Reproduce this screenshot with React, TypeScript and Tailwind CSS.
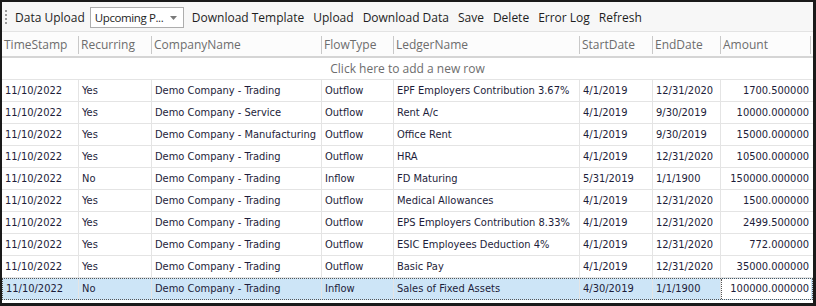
import React from "react";

type Row = {
  ts: string;
  rec: string;
  company: string;
  flow: string;
  ledger: string;
  start: string;
  end: string;
  amount: string;
};

const rows: Row[] = [
  { ts: "11/10/2022", rec: "Yes", company: "Demo Company - Trading", flow: "Outflow", ledger: "EPF Employers Contribution 3.67%", start: "4/1/2019", end: "12/31/2020", amount: "1700.500000" },
  { ts: "11/10/2022", rec: "Yes", company: "Demo Company - Service", flow: "Outflow", ledger: "Rent A/c", start: "4/1/2019", end: "9/30/2019", amount: "10000.000000" },
  { ts: "11/10/2022", rec: "Yes", company: "Demo Company - Manufacturing", flow: "Outflow", ledger: "Office Rent", start: "4/1/2019", end: "9/30/2019", amount: "15000.000000" },
  { ts: "11/10/2022", rec: "Yes", company: "Demo Company - Trading", flow: "Outflow", ledger: "HRA", start: "4/1/2019", end: "12/31/2020", amount: "10500.000000" },
  { ts: "11/10/2022", rec: "No", company: "Demo Company - Trading", flow: "Inflow", ledger: "FD Maturing", start: "5/31/2019", end: "1/1/1900", amount: "150000.000000" },
  { ts: "11/10/2022", rec: "Yes", company: "Demo Company - Trading", flow: "Outflow", ledger: "Medical Allowances", start: "4/1/2019", end: "12/31/2020", amount: "1500.000000" },
  { ts: "11/10/2022", rec: "Yes", company: "Demo Company - Trading", flow: "Outflow", ledger: "EPS Employers Contribution 8.33%", start: "4/1/2019", end: "12/31/2020", amount: "2499.500000" },
  { ts: "11/10/2022", rec: "Yes", company: "Demo Company - Trading", flow: "Outflow", ledger: "ESIC Employees Deduction 4%", start: "4/1/2019", end: "12/31/2020", amount: "772.000000" },
  { ts: "11/10/2022", rec: "Yes", company: "Demo Company - Trading", flow: "Outflow", ledger: "Basic Pay", start: "4/1/2019", end: "12/31/2020", amount: "35000.000000" },
  { ts: "11/10/2022", rec: "No", company: "Demo Company - Trading", flow: "Inflow", ledger: "Sales of Fixed Assets", start: "4/30/2019", end: "1/1/1900", amount: "100000.000000" },
];

// column widths in px, summing to the grid width
const cols = [
  { key: "ts", title: "TimeStamp", w: 77 },
  { key: "rec", title: "Recurring", w: 73 },
  { key: "company", title: "CompanyName", w: 170 },
  { key: "flow", title: "FlowType", w: 72 },
  { key: "ledger", title: "LedgerName", w: 186 },
  { key: "start", title: "StartDate", w: 73 },
  { key: "end", title: "EndDate", w: 68 },
  { key: "amount", title: "Amount", w: 90 },
] as const;

const toolbarItems = ["Download Template", "Upload", "Download Data", "Save", "Delete", "Error Log", "Refresh"];

const uiFont = { fontFamily: '"Open Sans", "Noto Sans", sans-serif' };
const gridFont = { fontFamily: '"DejaVu Sans", Verdana, sans-serif', fontStretch: "condensed" as const };

const Gripper = () => (
  <div className="flex flex-col gap-[2px] ml-[3px] mr-[8px] mt-[-2px]">
    {[0, 1, 2, 3].map((i) => (
      <div key={i} className="w-[2px] h-[2px] bg-[#9a9a9a]" />
    ))}
  </div>
);

export default function App() {
  return (
    <div className="w-[816px] h-[306px] bg-white border-t-2 border-l-2 border-r-[3px] border-b-[3px] border-[#1a1a1a] overflow-hidden">
      {/* toolbar */}
      <div
        className="h-[30px] flex items-center pt-[3px] bg-[#f7f7f7] border-b border-[#e3e3e3] text-[12px] text-[#1e1e1e]"
        style={uiFont}
      >
        <Gripper />
        <span className="mr-[5px]">Data Upload</span>
        <div className="w-[94px] h-[21px] border border-[#adadad] bg-white flex items-center justify-between pl-[4px] pr-[6px] mr-[8px] mt-[-1px]">
          <span className="whitespace-nowrap tracking-[-0.4px] text-[11.5px]">Upcoming P...</span>
          <svg width="7" height="4" viewBox="0 0 7 4" className="shrink-0">
            <path d="M0 0h7L3.5 4z" fill="#7a7a7a" />
          </svg>
        </div>
        <div className="flex gap-[9px]">
          {toolbarItems.map((t) => (
            <span key={t}>{t}</span>
          ))}
        </div>
      </div>

      {/* header */}
      <div
        className="h-[26px] flex items-center pt-[1px] bg-[#fcfcfc] border-b-2 border-[#d5d5d5] text-[12px] text-[#6d6d6d]"
        style={uiFont}
      >
        {cols.map((c) => (
          <div
            key={c.key}
            className="h-[18px] flex items-center pl-[2px] border-r border-[#c9c9c9] shrink-0"
            style={{ width: c.w }}
          >
            {c.title}
          </div>
        ))}
      </div>

      {/* new row */}
      <div
        className="h-[22px] flex items-center justify-center border-b border-[#e4e4e4] text-[12px] text-[#6d6d6d]"
        style={uiFont}
      >
        Click here to add a new row
      </div>

      {/* data */}
      <div className="text-[11px] text-[#1d1d3a]" style={gridFont}>
        {rows.map((r, i) => {
          const selected = i === rows.length - 1;
          return (
            <div
              key={i}
              className={
                selected
                  ? "h-[22px] flex bg-[#cde5f7] border border-dotted border-[#555]"
                  : "h-[22px] flex border-b border-[#e4e4e4]"
              }
            >
              {cols.map((c, ci) => {
                const last = ci === cols.length - 1;
                return (
                  <div
                    key={c.key}
                    className={
                      (last
                        ? "justify-end pr-[2px] "
                        : "pl-[3px] border-r border-[#e4e4e4] ") +
                      (selected && last ? "bg-white border-l border-dotted border-[#555] " : "") +
                      "flex items-center pt-[1px] shrink-0 whitespace-nowrap overflow-hidden"
                    }
                    style={{ width: selected && ci === 0 ? c.w - 1 : c.w }}
                  >
                    {r[c.key]}
                  </div>
                );
              })}
            </div>
          );
        })}
      </div>
    </div>
  );
}
